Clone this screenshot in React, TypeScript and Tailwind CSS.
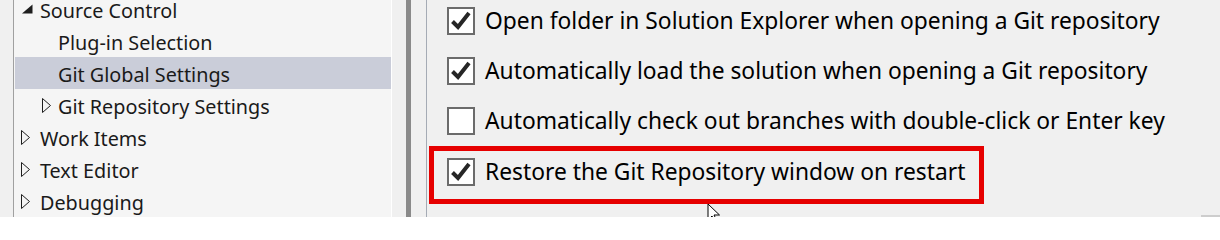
import React from "react";

const font = { fontFamily: '"Noto Sans", "Open Sans", sans-serif' };

function Expanded() {
  return (
    <svg width="12" height="10" viewBox="0 0 12 10" className="shrink-0">
      <polygon points="11.5,0.5 11.5,9.5 1,9.5" fill="#1e1e1e" />
    </svg>
  );
}

function Collapsed() {
  return (
    <svg width="10" height="15" viewBox="0 0 10 15" className="shrink-0">
      <polygon points="0.5,0.5 8.5,7.5 0.5,14.5" fill="none" stroke="#1e1e1e" strokeWidth="1" />
    </svg>
  );
}

function TreeRow({
  indent,
  icon,
  label,
  selected,
}: {
  indent: number;
  icon?: "exp" | "col";
  label: string;
  selected?: boolean;
}) {
  return (
    <div className={`flex h-[32px] items-center ${selected ? "bg-[#cacdd9]" : ""}`}>
      <div className={`flex items-center ${indent === 0 ? "w-[25px] pl-[6px]" : "w-[43px] pl-[27px]"}`}>
        {icon === "exp" && <Expanded />}
        {icon === "col" && <Collapsed />}
      </div>
      <span className="pt-[4px] text-[19.8px] leading-none text-[#1a1a1a] whitespace-nowrap">{label}</span>
    </div>
  );
}

function Check({ checked }: { checked: boolean }) {
  return (
    <div className="h-[28px] w-[28px] shrink-0 border-2 border-[#6b6b6b] bg-white">
      {checked && (
        <svg width="24" height="24" viewBox="0 0 24 24">
          <path d="M3.5 12.5 L9 18 L20 4" fill="none" stroke="#262626" strokeWidth="4" strokeLinecap="butt" strokeLinejoin="miter" />
        </svg>
      )}
    </div>
  );
}

function OptionRow({ checked, label }: { checked: boolean; label: string }) {
  return (
    <div className="flex items-center gap-[10px]">
      <Check checked={checked} />
      <span className="text-[22.8px] leading-none text-black whitespace-nowrap">{label}</span>
    </div>
  );
}

export default function App() {
  return (
    <div className="relative flex h-[217px] w-[1220px] overflow-hidden bg-[#f0f0f0]" style={font}>
      <div className="w-[13px] shrink-0" />
      <div className="w-[378px] shrink-0 border-l border-[#a0a0a0] bg-[#f5f5f5]">
        <div className="-mt-[7px] flex flex-col pl-px">
          <TreeRow indent={0} icon="exp" label="Source Control" />
          <TreeRow indent={1} label="Plug-in Selection" />
          <TreeRow indent={1} label="Git Global Settings" selected />
          <TreeRow indent={1} icon="col" label="Git Repository Settings" />
          <TreeRow indent={0} icon="col" label="Work Items" />
          <TreeRow indent={0} icon="col" label="Text Editor" />
          <TreeRow indent={0} icon="col" label="Debugging" />
        </div>
      </div>
      <div className="w-px shrink-0 bg-white" />
      <div className="w-[14px] shrink-0" />
      <div className="w-[5px] shrink-0 bg-[#8a8a8a]" />
      <div className="w-[15px] shrink-0" />
      <div className="w-px shrink-0 bg-[#a5abb5]" />
      <div className="flex flex-1 flex-col pl-[20px] pt-[7px]">
        <div className="flex flex-col gap-[22px]">
          <OptionRow checked label="Open folder in Solution Explorer when opening a Git repository" />
          <OptionRow checked label="Automatically load the solution when opening a Git repository" />
          <OptionRow checked={false} label="Automatically check out branches with double-click or Enter key" />
        </div>
        <div className="-ml-[18px] mt-[11px] w-[555px] border-[5px] border-[#e60000] pl-[13px] pt-[7px] pb-[13px]">
          <OptionRow checked label="Restore the Git Repository window on restart" />
        </div>
      </div>
      <svg className="absolute left-[707px] top-[203px]" width="14" height="20" viewBox="0 0 14 20">
        <path d="M1 1 L1 17 L5 13 L8 19 L10 18 L7 12 L12.5 12 Z" fill="white" stroke="black" strokeWidth="1" />
      </svg>
      <div className="absolute left-[1201px] top-[215px] h-[2px] w-[19px] bg-[#cdcdcd]" />
    </div>
  );
}
